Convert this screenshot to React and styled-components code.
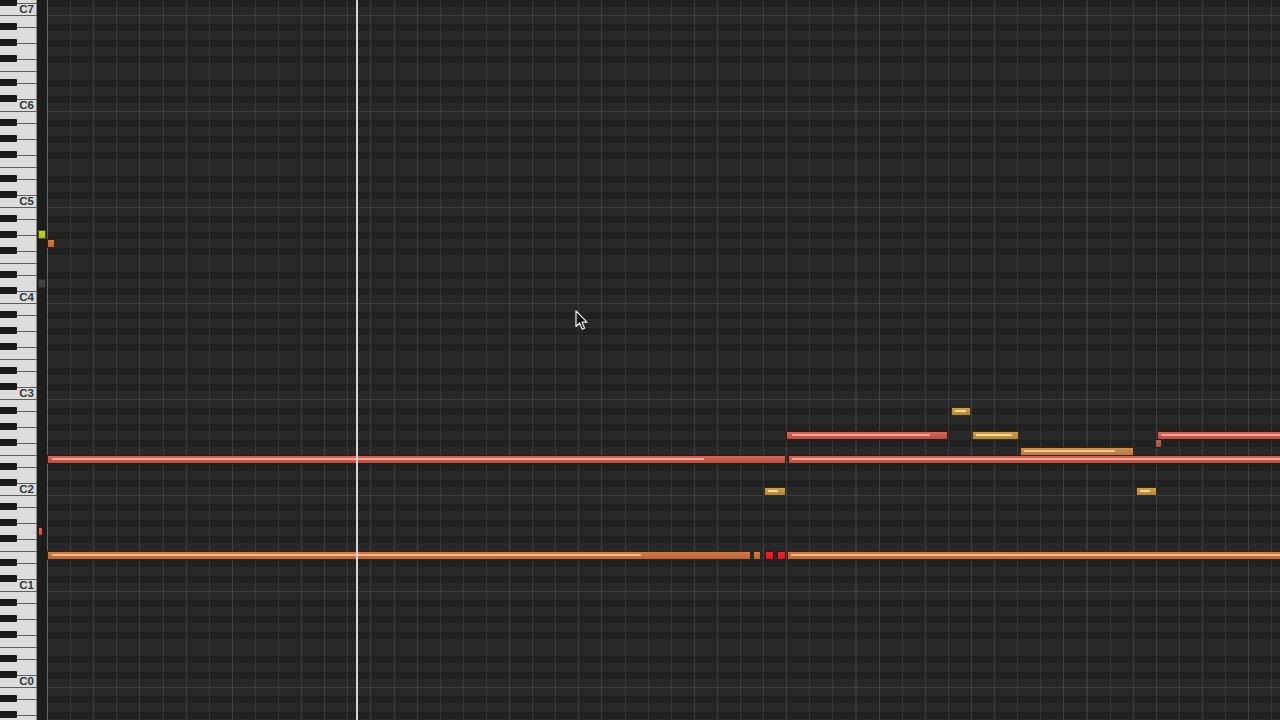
import React from 'react';
import styled, { createGlobalStyle } from 'styled-components';

const GlobalStyle = createGlobalStyle`
  html, body {
    margin: 0;
    padding: 0;
    background: #1e1e1e;
  }
  body {
    font-family: "Liberation Sans", Arial, sans-serif;
  }
`;

const OCTAVES = [7, 6, 5, 4, 3, 2, 1, 0, -1];
// white keys from top of octave (B) down to C, heights in px
const WHITE_KEYS = [
  { name: 'B', h: 12 },
  { name: 'A', h: 16 },
  { name: 'G', h: 16 },
  { name: 'F', h: 12 },
  { name: 'E', h: 12 },
  { name: 'D', h: 16 },
  { name: 'C', h: 12 },
];
const BLACK_OFFSETS = [8, 24, 40, 64, 80];
const ROWS = ['B', 'A#', 'A', 'G#', 'G', 'F#', 'F', 'E', 'D#', 'D', 'C#', 'C'];

const COL = 23.1;
const ORIGIN = 47;
const colX = (c) => ORIGIN + c * COL;
// C0 = 0, C7 = 84 ; row top for C7 is 8px
const rowTop = (n) => 8 + (84 - n) * 8;

const COLORS = {
  red: { top: '#d06a5b', bottom: '#b94f42', border: '#3d1410', hl: '#f2a899' },
  orange: { top: '#cf7c48', bottom: '#b86638', border: '#3d200c', hl: '#f4b98c' },
  gold: { top: '#caa050', bottom: '#b28640', border: '#3d2c0c', hl: '#f6da95' },
  tan: { top: '#cf8e52', bottom: '#b87a40', border: '#3d240c', hl: '#f4c490' },
  hot: { top: '#ec2530', bottom: '#d21a26', border: '#4a0808', hl: null },
  muted: { top: '#b06a58', bottom: '#9c5848', border: '#3a1a12', hl: null },
  lime: { top: '#c2d23a', bottom: '#aabc2a', border: '#4a5010', hl: null },
  shade: { top: '#444444', bottom: '#3c3c3c', border: '#2a2a2a', hl: null },
};

const NOTES = [
  { x0: 47, x1: 786, n: 28, kind: 'red', hl: [52, 704] },
  { x0: 788, x1: 1290, n: 28, kind: 'red', hl: [792, 1290] },
  { x0: 47, x1: 751, n: 16, kind: 'orange', hl: [52, 641] },
  { x0: 753, x1: 761, n: 16, kind: 'orange' },
  { x0: 765, x1: 774, n: 16, kind: 'hot' },
  { x0: 777, x1: 786, n: 16, kind: 'hot' },
  { x0: 787, x1: 1290, n: 16, kind: 'orange', hl: [791, 1290] },
  { x0: colX(32), x1: colX(39), n: 31, kind: 'red', hl: [792, 930] },
  { x0: 951, x1: colX(40), n: 34, kind: 'gold', hl: [955, 966] },
  { x0: 972, x1: 1019, n: 31, kind: 'gold', hl: [976, 1012] },
  { x0: 1020, x1: 1134, n: 29, kind: 'tan', hl: [1024, 1115] },
  { x0: 1155, x1: 1162, n: 30, kind: 'muted' },
  { x0: 1157, x1: 1290, n: 31, kind: 'red', hl: [1161, 1290] },
  { x0: 764, x1: 786, n: 24, kind: 'gold', hl: [768, 778] },
  { x0: 1136, x1: 1157, n: 24, kind: 'gold', hl: [1140, 1150] },
  // markers in the gutter
  { x0: 38, x1: 46, n: 56, kind: 'lime', dy: -1 },
  { x0: 47, x1: 55, n: 55, kind: 'orange' },
  { x0: 38, x1: 46, n: 50, kind: 'shade' },
  { x0: 38, x1: 43, n: 19, kind: 'red' },
];

const Screen = styled.div`
  position: relative;
  width: 1280px;
  height: 720px;
  overflow: hidden;
  background: #1e1e1e;
`;

const Editor = styled.div`
  display: flex;
  margin-top: -80px;
  height: 864px;
`;

const Keyboard = styled.div`
  flex: none;
  width: 37px;
  display: flex;
  flex-direction: column;
  background: #dcdcdc;
  box-shadow: inset -1px 0 0 #8c8c8c;
`;

const Octave = styled.div`
  position: relative;
  height: 96px;
  display: flex;
  flex-direction: column;
`;

const WhiteKey = styled.div`
  box-sizing: border-box;
  height: ${(p) => p.$h}px;
  display: flex;
  align-items: center;
  justify-content: flex-end;
  padding-right: 3px;
  box-shadow: inset 0 -1px 0 #5e5e5e;
  font-size: 11.5px;
  font-weight: bold;
  color: #383838;
  line-height: 1;
`;

const BlackKey = styled.div`
  position: absolute;
  left: 0;
  top: ${(p) => p.$top - 1}px;
  width: 17px;
  height: 7px;
  background: #1a1a1a;
  border-radius: 0 1px 1px 0;
`;

const Gutter = styled.div`
  flex: none;
  width: 10px;
  background: #1d1d1d;
`;

const Grid = styled.div`
  position: relative;
  flex: 1;
  display: flex;
  flex-direction: column;
  &::after {
    content: '';
    position: absolute;
    inset: 0;
    pointer-events: none;
    background-image:
      linear-gradient(to right, rgba(255, 255, 255, 0.2) 0 1px, transparent 1px),
      repeating-linear-gradient(to right, rgba(255, 255, 255, 0.04) 0 1px, transparent 1px 92.4px),
      repeating-linear-gradient(to right, rgba(255, 255, 255, 0.09) 0 1px, transparent 1px 23.1px);
  }
`;

const Row = styled.div`
  height: 8px;
  flex: none;
  background: ${(p) => (p.$black ? '#212121' : '#282828')};
  box-shadow: inset 0 -1px 0 ${(p) => (p.$octave ? '#3a3a3a' : '#2b2b2b')};
`;

const NoteLayer = styled.div`
  position: absolute;
  inset: 0;
  pointer-events: none;
`;

const Note = styled.div`
  position: absolute;
  box-sizing: border-box;
  height: 9px;
  border: 1px solid ${(p) => COLORS[p.$kind].border};
  background: linear-gradient(
    ${(p) => COLORS[p.$kind].top},
    ${(p) => COLORS[p.$kind].bottom}
  );
`;

const Highlight = styled.div`
  position: absolute;
  top: 2px;
  height: 2px;
  background: ${(p) => COLORS[p.$kind].hl};
`;

const Playhead = styled.div`
  position: absolute;
  top: 0;
  bottom: 0;
  left: 356px;
  width: 2px;
  background: #d4d4d4;
`;

const Pointer = styled.svg`
  position: absolute;
  left: 575px;
  top: 310px;
`;

function Keys() {
  return (
    <Keyboard>
      {OCTAVES.map((o) => (
        <Octave key={o}>
          {WHITE_KEYS.map((k) => (
            <WhiteKey key={k.name} $h={k.h}>
              {k.name === 'C' && o >= 0 ? `C${o}` : ''}
            </WhiteKey>
          ))}
          {BLACK_OFFSETS.map((t) => (
            <BlackKey key={t} $top={t} />
          ))}
        </Octave>
      ))}
    </Keyboard>
  );
}

function Lanes() {
  return (
    <Grid>
      {OCTAVES.map((o) =>
        ROWS.map((r) => (
          <Row key={`${o}${r}`} $black={r.includes('#')} $octave={r === 'C'} />
        ))
      )}
    </Grid>
  );
}

export default function App() {
  return (
    <>
      <GlobalStyle />
      <Screen>
        <Editor>
          <Keys />
          <Gutter />
          <Lanes />
        </Editor>
        <NoteLayer>
          {NOTES.map((note, i) => (
            <Note
              key={i}
              $kind={note.kind}
              style={{
                left: note.x0,
                width: note.x1 - note.x0,
                top: rowTop(note.n) - 1 + (note.dy || 0),
              }}
            >
              {note.hl && (
                <Highlight
                  $kind={note.kind}
                  style={{ left: note.hl[0] - note.x0 - 1, width: note.hl[1] - note.hl[0] }}
                />
              )}
            </Note>
          ))}
        </NoteLayer>
        <Playhead />
        <Pointer width="13" height="21" viewBox="0 0 13 21">
          <path
            d="M1 1 L1 16.5 L4.6 13 L7.2 19.2 L9.6 18.2 L7 12.2 L12 12.2 Z"
            fill="#111"
            stroke="#f2f2f2"
            strokeWidth="1.2"
            strokeLinejoin="round"
          />
        </Pointer>
      </Screen>
    </>
  );
}
